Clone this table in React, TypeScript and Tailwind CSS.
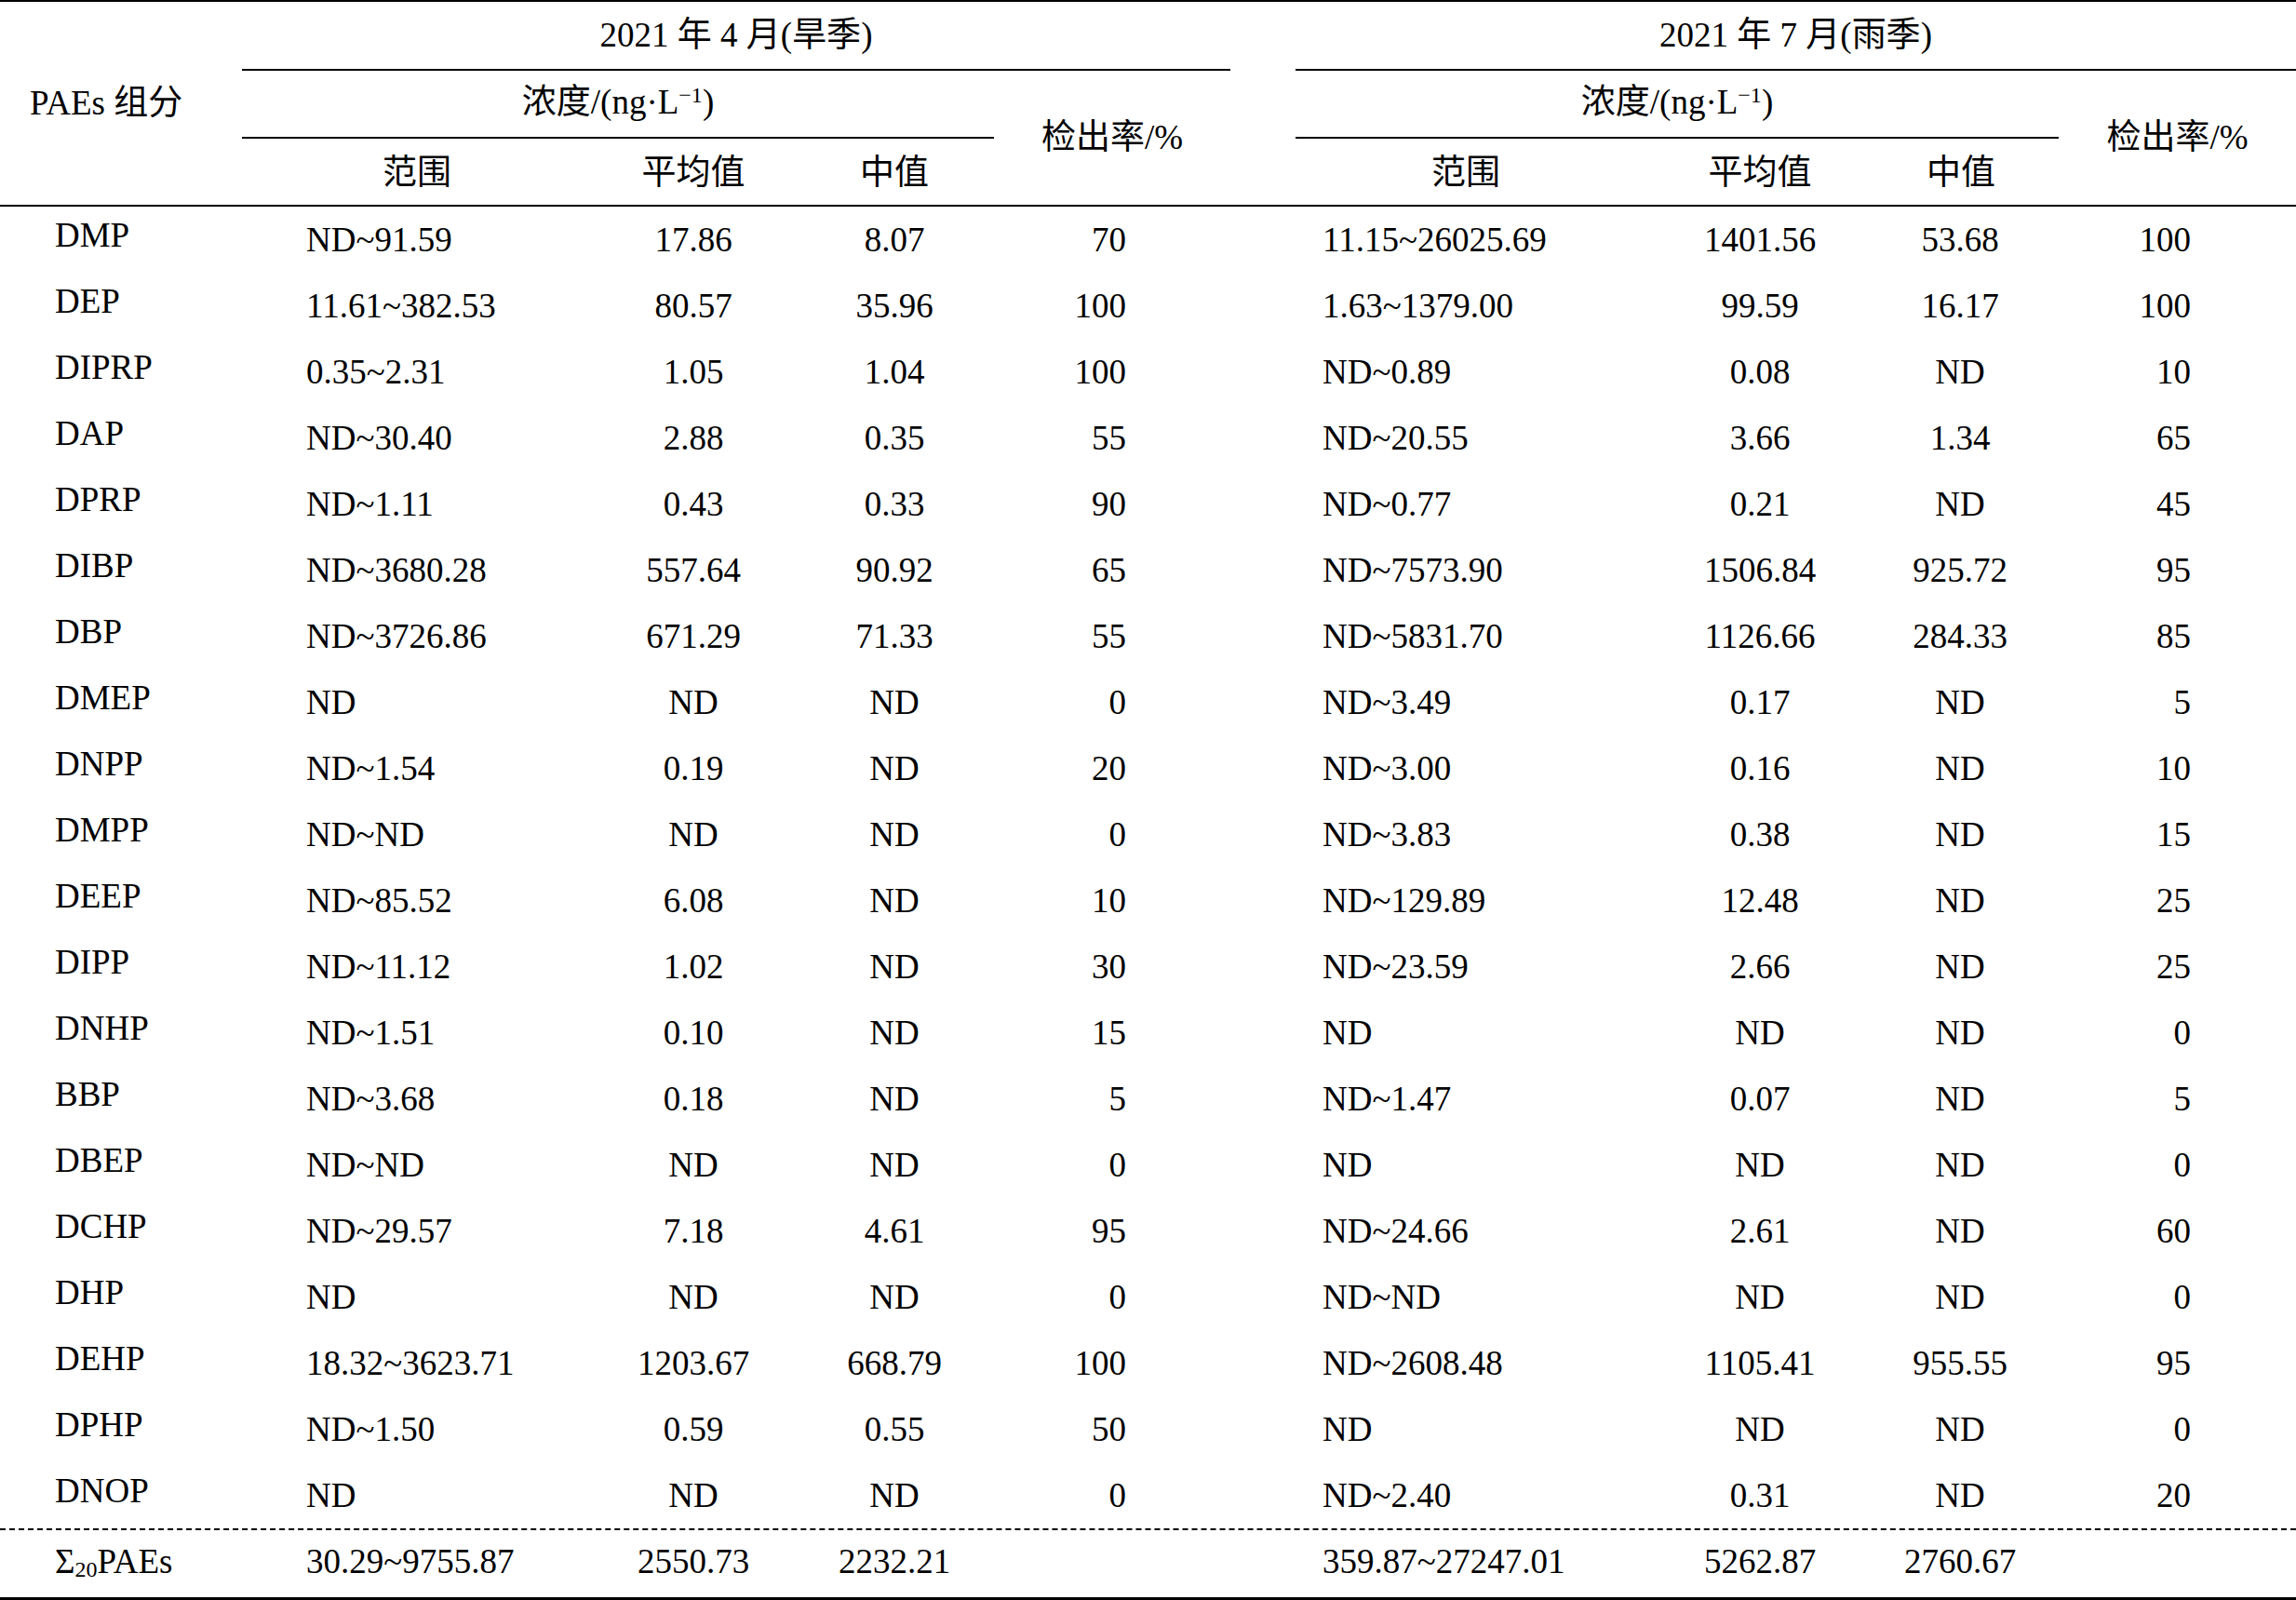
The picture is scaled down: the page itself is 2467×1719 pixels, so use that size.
const cols = "grid grid-cols-[260px_376px_218px_214px_254px_70px_366px_266px_188px_255px]"

const rows = [
  ["DMP", "ND~91.59", "17.86", "8.07", "70", "11.15~26025.69", "1401.56", "53.68", "100"],
  ["DEP", "11.61~382.53", "80.57", "35.96", "100", "1.63~1379.00", "99.59", "16.17", "100"],
  ["DIPRP", "0.35~2.31", "1.05", "1.04", "100", "ND~0.89", "0.08", "ND", "10"],
  ["DAP", "ND~30.40", "2.88", "0.35", "55", "ND~20.55", "3.66", "1.34", "65"],
  ["DPRP", "ND~1.11", "0.43", "0.33", "90", "ND~0.77", "0.21", "ND", "45"],
  ["DIBP", "ND~3680.28", "557.64", "90.92", "65", "ND~7573.90", "1506.84", "925.72", "95"],
  ["DBP", "ND~3726.86", "671.29", "71.33", "55", "ND~5831.70", "1126.66", "284.33", "85"],
  ["DMEP", "ND", "ND", "ND", "0", "ND~3.49", "0.17", "ND", "5"],
  ["DNPP", "ND~1.54", "0.19", "ND", "20", "ND~3.00", "0.16", "ND", "10"],
  ["DMPP", "ND~ND", "ND", "ND", "0", "ND~3.83", "0.38", "ND", "15"],
  ["DEEP", "ND~85.52", "6.08", "ND", "10", "ND~129.89", "12.48", "ND", "25"],
  ["DIPP", "ND~11.12", "1.02", "ND", "30", "ND~23.59", "2.66", "ND", "25"],
  ["DNHP", "ND~1.51", "0.10", "ND", "15", "ND", "ND", "ND", "0"],
  ["BBP", "ND~3.68", "0.18", "ND", "5", "ND~1.47", "0.07", "ND", "5"],
  ["DBEP", "ND~ND", "ND", "ND", "0", "ND", "ND", "ND", "0"],
  ["DCHP", "ND~29.57", "7.18", "4.61", "95", "ND~24.66", "2.61", "ND", "60"],
  ["DHP", "ND", "ND", "ND", "0", "ND~ND", "ND", "ND", "0"],
  ["DEHP", "18.32~3623.71", "1203.67", "668.79", "100", "ND~2608.48", "1105.41", "955.55", "95"],
  ["DPHP", "ND~1.50", "0.59", "0.55", "50", "ND", "ND", "ND", "0"],
  ["DNOP", "ND", "ND", "ND", "0", "ND~2.40", "0.31", "ND", "20"],
]

const total = ["30.29~9755.87", "2550.73", "2232.21", "", "359.87~27247.01", "5262.87", "2760.67", ""]

// split Han from Latin so digits and punctuation stay in the serif face
function Mixed({ text }: { text: string }) {
  const parts = text.split(/([\u4e00-\u9fff]+)/).filter(Boolean)
  return (
    <span>
      {parts.map((p, i) =>
        /[\u4e00-\u9fff]/.test(p) ? (
          <span key={i} className="font-['Noto_Sans_CJK_SC'] leading-none">{p}</span>
        ) : (
          <span key={i} className="font-['Liberation_Serif']">{p}</span>
        )
      )}
    </span>
  )
}

function Unit() {
  return (
    <>
      <span className="font-['Noto_Sans_CJK_SC'] leading-none">浓度</span>
      <span className="font-['Liberation_Serif']">
        /(ng·L<sup className="relative -top-[12px] align-baseline text-[24px] leading-none">−1</sup>)
      </span>
    </>
  )
}

function Cells({ v, leading }: { v: string[]; leading: string }) {
  // v: 范围, 平均值, 中值, 检出率 × 2 seasons
  return (
    <>
      <div className={`pl-[69px] ${leading}`}>{v[0]}</div>
      <div className={`text-center ${leading}`}>{v[1]}</div>
      <div className={`text-center ${leading}`}>{v[2]}</div>
      <div className={`text-right pr-[112px] ${leading}`}>{v[3]}</div>
      <div />
      <div className={`pl-[29px] ${leading}`}>{v[4]}</div>
      <div className={`text-center ${leading}`}>{v[5]}</div>
      <div className={`text-center pr-[24px] ${leading}`}>{v[6]}</div>
      <div className={`text-right pr-[113px] ${leading}`}>{v[7]}</div>
    </>
  )
}

export default function App() {
  return (
    <div className="w-[2467px] bg-white text-black text-[37px] whitespace-nowrap font-['Liberation_Serif',serif]">
      {/* header */}
      <div className={`${cols} grid-rows-[74px_73px_71px] border-t-2 border-b-2 border-black`}>
        <div className="col-start-1 row-start-1 row-span-3 flex items-center pl-[32px]">
          <Mixed text="PAEs 组分" />
        </div>

        <div className="col-start-2 col-span-4 row-start-1 border-b-2 border-black text-center leading-[72px]">
          <Mixed text="2021 年 4 月(旱季)" />
        </div>
        <div className="col-start-7 col-span-4 row-start-1 border-b-2 border-black text-center leading-[72px]">
          <Mixed text="2021 年 7 月(雨季)" />
        </div>

        <div className="col-start-2 col-span-3 row-start-2 border-b-2 border-black text-center leading-[67px]">
          <Unit />
        </div>
        <div className="col-start-5 row-start-2 row-span-2 flex items-center justify-center">
          <Mixed text="检出率/%" />
        </div>
        <div className="col-start-7 col-span-3 row-start-2 border-b-2 border-black text-center leading-[67px]">
          <Unit />
        </div>
        <div className="col-start-10 row-start-2 row-span-2 flex items-center justify-center">
          <Mixed text="检出率/%" />
        </div>

        <div className="col-start-2 row-start-3 flex items-center justify-center pb-[4px] font-['Noto_Sans_CJK_SC']">范围</div>
        <div className="col-start-3 row-start-3 flex items-center justify-center pb-[4px] font-['Noto_Sans_CJK_SC']">平均值</div>
        <div className="col-start-4 row-start-3 flex items-center justify-center pb-[4px] font-['Noto_Sans_CJK_SC']">中值</div>
        <div className="col-start-7 row-start-3 flex items-center justify-center pb-[4px] font-['Noto_Sans_CJK_SC']">范围</div>
        <div className="col-start-8 row-start-3 flex items-center justify-center pb-[4px] font-['Noto_Sans_CJK_SC']">平均值</div>
        <div className="col-start-9 row-start-3 flex items-center justify-center pb-[4px] pr-[22px] font-['Noto_Sans_CJK_SC']">中值</div>
      </div>

      {/* body */}
      {rows.map((r) => (
        <div key={r[0]} className={`${cols} h-[71px]`}>
          <div className="pl-[59px] leading-[61px]">{r[0]}</div>
          <Cells v={r.slice(1)} leading="leading-[71px]" />
        </div>
      ))}

      {/* total */}
      <div className="h-0 border-t-2 border-dashed border-black" />
      <div className={`${cols} h-[75px] border-b-[3px] border-black`}>
        <div className="pl-[59px] leading-[67px]">
          Σ<sub className="relative top-[4px] align-baseline text-[24px] leading-none">20</sub>PAEs
        </div>
        <Cells v={total} leading="leading-[67px]" />
      </div>
    </div>
  )
}
